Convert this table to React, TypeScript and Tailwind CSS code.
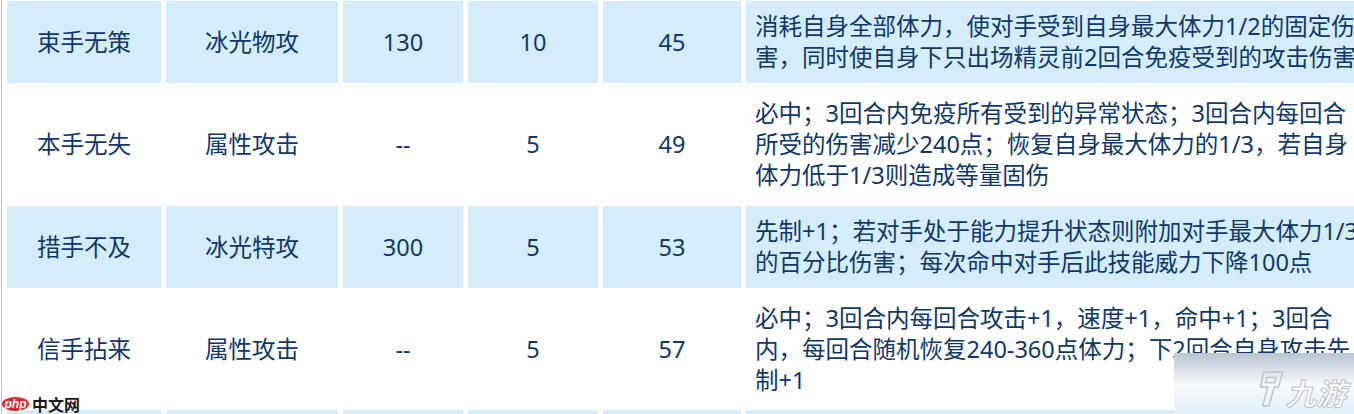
const rows = [
  {
    name: "束手无策",
    type: "冰光物攻",
    power: "130",
    pp: "10",
    level: "45",
    desc: ["消耗自身全部体力，使对手受到自身最大体力1/2的固定伤", "害，同时使自身下只出场精灵前2回合免疫受到的攻击伤害"],
    shaded: true,
    height: "h-[82px]",
  },
  {
    name: "本手无失",
    type: "属性攻击",
    power: "--",
    pp: "5",
    level: "49",
    desc: [
      "必中；3回合内免疫所有受到的异常状态；3回合内每回合",
      "所受的伤害减少240点；恢复自身最大体力的1/3，若自身",
      "体力低于1/3则造成等量固伤",
    ],
    shaded: false,
    height: "h-[113px]",
  },
  {
    name: "措手不及",
    type: "冰光特攻",
    power: "300",
    pp: "5",
    level: "53",
    desc: ["先制+1；若对手处于能力提升状态则附加对手最大体力1/3", "的百分比伤害；每次命中对手后此技能威力下降100点"],
    shaded: true,
    height: "h-[82px]",
  },
  {
    name: "信手拈来",
    type: "属性攻击",
    power: "--",
    pp: "5",
    level: "57",
    desc: [
      "必中；3回合内每回合攻击+1，速度+1，命中+1；3回合",
      "内，每回合随机恢复240-360点体力；下2回合自身攻击先",
      "制+1",
    ],
    shaded: false,
    height: "h-[112px]",
  },
];

export default function App() {
  return (
    <main
      className="relative h-[414px] w-[1354px] overflow-hidden bg-white text-[23.5px] text-[#0e386c]"
      style={{ fontFamily: '"Noto Sans", "Noto Sans CJK SC", sans-serif' }}
    >
      <table className="-mt-[4px] ml-px w-[1510px] table-fixed border-separate border-spacing-[5px] border-l border-[#a9c8e0] leading-[31px]">
        <colgroup>
          <col className="w-[154px]" />
          <col className="w-[172px]" />
          <col className="w-[120px]" />
          <col className="w-[130px]" />
          <col className="w-[138px]" />
          <col className="w-[760px]" />
        </colgroup>
        <tbody>
          {rows.map((r) => (
            <SkillRow key={r.name} row={r} />
          ))}
          <tr className="h-[82px]">
            {Array.from({ length: 6 }).map((_, i) => (
              <td key={i} className="bg-[#d5ecfb]" />
            ))}
          </tr>
        </tbody>
      </table>

      <PhpMark />
      <JiuyouMark />
    </main>
  );
}

function SkillRow({ row }: { row: (typeof rows)[number] }) {
  const bg = row.shaded ? "bg-[#d5ecfb]" : "bg-white";
  return (
    <tr className={row.height}>
      <td className={`${bg} p-0 text-center`}>{row.name}</td>
      <td className={`${bg} p-0 text-center`}>{row.type}</td>
      <td className={`${bg} p-0 text-center`}>{row.power}</td>
      <td className={`${bg} p-0 text-center`}>{row.pp}</td>
      <td className={`${bg} p-0 text-center`}>{row.level}</td>
      <td className={`${bg} py-0 pl-[9px] pr-0 text-left`}>
        {row.desc.map((line) => (
          <div key={line} className="whitespace-nowrap">
            {line}
          </div>
        ))}
      </td>
    </tr>
  );
}

function PhpMark() {
  return (
    <div className="absolute left-[2px] top-[396px] flex items-center gap-[3px]">
      <span
        className="flex h-[14px] w-[27px] items-center justify-center rounded-[50%] bg-[#e3262b] text-[12px] font-bold italic leading-none text-white"
        style={{ fontFamily: '"Liberation Sans", sans-serif' }}
      >
        php
      </span>
      <span className="text-[16px] font-bold leading-none text-[#1a1a1a]" style={{ fontFamily: '"Noto Sans CJK SC", sans-serif' }}>
        中文网
      </span>
    </div>
  );
}

function JiuyouMark() {
  return (
    <div className="absolute left-[1174px] top-[353px] flex h-[61px] w-[180px] items-end justify-end gap-[1px] bg-gradient-to-b from-[#b9c4d2] via-[#f6f8fa] to-[#e4f1fb] pb-[6px] pr-[8px]">
      <svg width="30" height="38" viewBox="0 0 28 36" fill="none" stroke="#c4c8ce" strokeWidth="1.6" strokeLinejoin="round">
        <path d="M8 2 H26 L22 16 H18 L13 34 H7 L12 16 H5 Z" />
        <path d="M11 7 H20 L18.5 12 H9.5 Z" />
      </svg>
      <span
        className="mb-[1px] text-[30px] font-bold italic leading-none text-white"
        style={{ fontFamily: '"Noto Sans CJK SC", sans-serif', WebkitTextStroke: "1px #c0c5cb" }}
      >
        九游
      </span>
    </div>
  );
}
